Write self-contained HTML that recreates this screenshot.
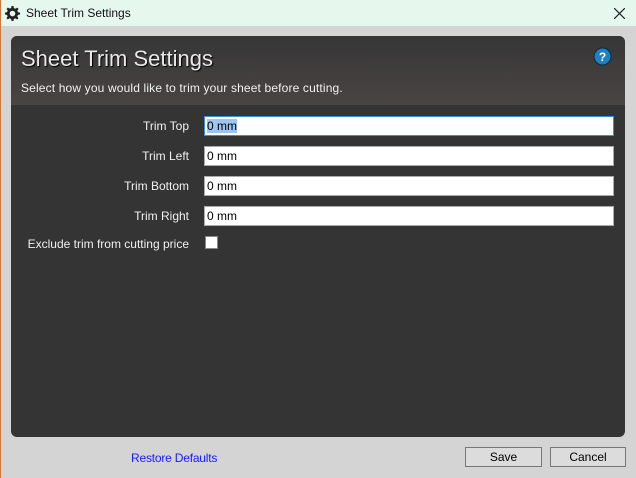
<!DOCTYPE html>
<html><head><style>
*{margin:0;padding:0;box-sizing:border-box}
body{width:636px;height:478px;background:#d4d4d4;font-family:"Liberation Sans",sans-serif;font-size:12px;position:relative;overflow:hidden}
.edge{position:absolute;left:0;top:0;width:1px;height:478px;background:#c87a45}
.title{position:absolute;left:1px;top:0;width:635px;height:26px;background:#e6f7ee}
.title span{position:absolute;left:25px;top:6px;font-size:12px;color:#111}
.panel{position:absolute;left:11px;top:36px;width:614px;height:401px;background:#343434;border-radius:6px;overflow:hidden}
.head{height:69px;background:linear-gradient(#363636,#4a4444)}
.h1{position:absolute;left:10px;top:10px;font-size:22px;color:#e8e8e8;text-shadow:1px 1px 1px #000}
.sub{position:absolute;left:10px;top:45px;font-size:12px;letter-spacing:0.15px;color:#f0f0f0}
.lbl{position:absolute;right:436px;color:#f0f0f0;font-size:12px}
.inp{position:absolute;left:193px;width:410px;height:20px;background:#fff;border:1px solid #aaa;font-size:12px;padding:2px 2px;color:#000}
.btn{position:absolute;top:447px;height:20px;background:#dcdcdc;border:1px solid #777;text-align:center;font-size:12px;line-height:18px}
</style></head><body>
<div class="edge"></div>
<div class="title">
<svg style="position:absolute;left:4px;top:6px" width="15" height="15" viewBox="0 0 16 16"><path fill="#222" d="M7 0h2l.5 2.2 1.6.7 1.9-1.2 1.4 1.4-1.2 1.9.7 1.6L16 7v2l-2.2.5-.7 1.6 1.2 1.9-1.4 1.4-1.9-1.2-1.6.7L9 16H7l-.5-2.2-1.6-.7-1.9 1.2-1.4-1.4 1.2-1.9-.7-1.6L0 9V7l2.2-.5.7-1.6-1.2-1.9 1.4-1.4 1.9 1.2 1.6-.7z"/><circle cx="8" cy="8" r="3" fill="#e6f7ee"/></svg>
<span>Sheet Trim Settings</span>
<svg style="position:absolute;left:613px;top:8px" width="11" height="11"><path d="M0 0L11 11M11 0L0 11" stroke="#222" stroke-width="1.2"/></svg>
</div>
<div class="panel">
<div class="head"></div>
<div class="h1">Sheet Trim Settings</div>
<div class="sub">Select how you would like to trim your sheet before cutting.</div>
<svg style="position:absolute;left:582px;top:11px" width="19" height="19"><circle cx="9.5" cy="9.5" r="8.5" fill="#1f7fc0" stroke="#0a2a40"/><text x="9.5" y="14" text-anchor="middle" font-family="Liberation Sans" font-weight="bold" font-size="12" fill="#fff">?</text></svg>
<div class="lbl" style="top:83px">Trim Top</div>
<div class="inp" style="top:80px;border-color:#3c8ce0"><span style="background:#9cc5f0">0 mm</span></div>
<div class="lbl" style="top:113px">Trim Left</div>
<div class="inp" style="top:110px">0 mm</div>
<div class="lbl" style="top:143px">Trim Bottom</div>
<div class="inp" style="top:140px">0 mm</div>
<div class="lbl" style="top:173px">Trim Right</div>
<div class="inp" style="top:170px">0 mm</div>
<div class="lbl" style="top:201px">Exclude trim from cutting price</div>
<div style="position:absolute;left:194px;top:200px;width:13px;height:13px;background:#fff;border:1px solid #888"></div>
</div>
<div style="position:absolute;left:131px;top:451px;color:#1a1aff;font-size:12px;letter-spacing:-0.2px">Restore Defaults</div>
<div class="btn" style="left:465px;width:77px">Save</div>
<div class="btn" style="left:550px;width:76px">Cancel</div>
</body></html>
